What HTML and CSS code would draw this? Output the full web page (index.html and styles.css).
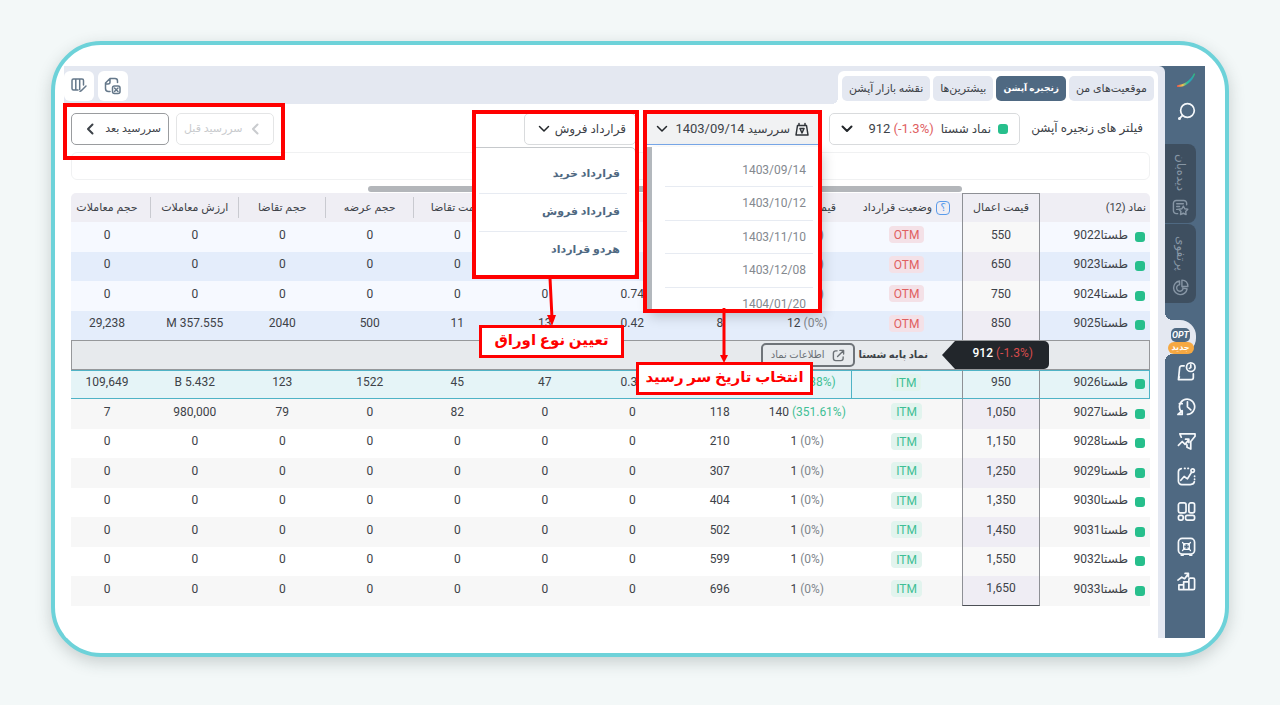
FILE: index.html
```
<!DOCTYPE html>
<html lang="fa" dir="rtl">
<head>
<meta charset="utf-8">
<meta name="viewport" content="width=device-width, initial-scale=1">
<title>زنجیره آپشن</title>
<link rel="stylesheet" href="styles.css">
</head>
<body>
<div class="frame">
<div class="app">

  <nav class="sidebar" aria-label="منوی اصلی">
    <a class="logo" href="#" aria-label="خانه">
      <svg width="20" height="16" viewBox="0 0 20 16"><defs><linearGradient id="lg" x1="0" x2="1"><stop offset="0" stop-color="#e0504f"/><stop offset=".3" stop-color="#f3c14d"/><stop offset=".55" stop-color="#2fc09a"/><stop offset=".8" stop-color="#2a9fb8"/><stop offset="1" stop-color="#35c46f"/></linearGradient></defs><path d="M1 13.200C8 12.500 14 9 18 1.200c1 0 1 .8.800 1.500C16 10 9 15.500 1 15z" fill="url(#lg)"/></svg>
    </a>
    <button class="side-btn search" type="button" aria-label="جستجو">
      <svg viewBox="0 0 20 20"><circle cx="11" cy="9" r="7.200"/><path d="M5.800 14 3 17"/><circle cx="2.600" cy="17.300" r=".7"/></svg>
    </button>
    <button class="side-tab" type="button">
      <span class="side-text">دیده‌بان</span>
      <svg viewBox="0 0 18 18"><path d="M15.500 6V4.500a3 3 0 0 0-3-3h-8a3 3 0 0 0-3 3v8a3 3 0 0 0 3 3H6M5 5h7M5 8h3M5 11h1.500"/><path d="m12 7.500 1.500 2.800 3.200.6-2.200 2.300.4 3.200-2.900-1.300L9 16.400l.5-3.200-2.300-2.300 3.300-.6z"/></svg>
    </button>
    <button class="side-tab" type="button">
      <span class="side-text">پرتفوی</span>
      <svg viewBox="0 0 18 18"><path d="M8 2.200a7.200 7.200 0 1 0 8 8.300L11 9.500M8 2.200V6M8 6a3.500 3.500 0 1 0 3.500 5"/><path d="M10.500 1.200V8h6.300c0-4-2.600-6.600-6.300-6.800z"/></svg>
    </button>
    <a class="side-opt" href="#"><span class="opt-mark">OPT</span><span class="opt-new">جدید</span></a>
    <div class="side-list">
      <button class="side-btn" type="button" aria-label="سفارش زمان‌دار"><svg viewBox="0 0 20 20"><path d="M7.500 4H5C3.500 4 3 4.500 2.800 6L1.500 18.500h13.500c1.500 0 2.200-.7 2.200-2.200V12.500M1.500 18.500l1-3"/><circle cx="14.500" cy="5.500" r="4.500"/><path d="M14.500 3v2.700l-1.500 1"/></svg></button>
      <button class="side-btn" type="button" aria-label="تاریخچه"><svg viewBox="0 0 20 20"><path d="M4.500 15.500A8 8 0 1 1 11 18.300M1 18.300h4.500V14.500M1 18.300l4.500-3.800M2.500 7h3M11 5v5.500l3.500 3"/></svg></button>
      <button class="side-btn" type="button" aria-label="فیلتر"><svg viewBox="0 0 20 20"><path d="M4.500 5.500 3 2h16v2.500L14.500 10v8l-4-2v-2.500M1.500 14l4-4 3 3L12.500 8M9 7.500h3.500V11"/></svg></button>
      <button class="side-btn" type="button" aria-label="نمودار"><svg viewBox="0 0 20 20"><path d="M4.500 1.800A3.500 3.500 0 0 0 1.500 5v10A3.500 3.500 0 0 0 5 18.500h9c2.500 0 4-1 4.300-3M18.500 9.500v.5M18.500 12.800v.3M8 1.500h.5M11.500 1.500h.5"/><path d="m4 14 3.500-4 3.500 2.500L15.300 5.500"/><circle cx="16.500" cy="3.800" r="1.800"/></svg></button>
      <button class="side-btn" type="button" aria-label="داشبورد"><svg viewBox="0 0 20 20"><rect x="1.500" y="1" width="8" height="10.500" rx="2"/><rect x="12.500" y="1" width="6" height="10.500" rx="2"/><rect x="1.500" y="14" width="5" height="5" rx="1.800"/><rect x="9" y="14" width="9.500" height="5" rx="1.800"/></svg></button>
      <button class="side-btn" type="button" aria-label="صندوق"><svg viewBox="0 0 20 20"><rect x="1.500" y="1.500" width="17" height="16.500" rx="4"/><path d="M4.500 19h2M13.500 19h2"/><path stroke-width="1.300" d="M7 7h6v6H7zM5.800 5.800 8.500 8.500M14.200 5.800l-2.700 2.700M5.800 14.200l2.700-2.700M14.200 14.200l-2.700-2.700"/></svg></button>
      <button class="side-btn" type="button" aria-label="بازار"><svg viewBox="0 0 20 20"><path d="M2 18.500v-5h5v5zM7 18.500V10.500h5.500v8M12.500 18.500V8A1.500 1.500 0 0 1 14 6.500h3A1.500 1.500 0 0 1 18.500 8v9a1.500 1.500 0 0 1-1.500 1.500H2M1 8.500l4-3 3 1.500 3.500-4.500M8.500 1.500H12V5"/></svg></button>
    </div>
  </nav>

  <main class="main">
    <header class="toolbar">
      <div class="tabs">
        <a class="tab" href="#">موقعیت‌های من</a>
        <a class="tab active" href="#">زنجیره آپشن</a>
        <a class="tab" href="#">بیشترین‌ها</a>
        <a class="tab" href="#">نقشه بازار آپشن</a>
      </div>
      <div class="tools">
        <button class="tool" type="button" aria-label="خروجی اکسل"><svg viewBox="0 0 18 18"><path d="M6 14.500H4.500a3 3 0 0 1-3-3V6L6 1.500h5a2.500 2.500 0 0 1 2.500 2.500v1.500M1.500 7H4a2 2 0 0 0 2-2V1.500"/><rect x="8.500" y="9" width="7.500" height="7.500" rx="2"/><path d="m10.500 11 3.500 3.500M14 11l-3.500 3.500"/></svg></button>
        <button class="tool" type="button" aria-label="ستون‌ها"><svg viewBox="0 0 18 18"><path d="M13.500 8V3.500A1.500 1.500 0 0 0 12 2H3.500A1.500 1.500 0 0 0 2 3.500v8A1.500 1.500 0 0 0 3.500 13H8M5.800 2v11M9.700 2v10.500M16 9l-4.500 4.500-1.500.8"/></svg></button>
      </div>
    </header>

    <section class="content">
      <div class="filters">
        <h1 class="filters-title">فیلتر های زنجیره آپشن</h1>
        <button class="picker symbol" type="button" aria-haspopup="listbox">
          <span class="dot"></span><span class="fa">نماد شستا</span>
          <span class="num big" dir="ltr">912 <span class="down">(-1.3%)</span></span>
          <svg class="chev" viewBox="0 0 12 8"><path d="m1.500 1.500 4.500 4.500 4.500-4.500"/></svg>
        </button>
        <div class="drop">
          <button class="picker date" type="button" aria-haspopup="listbox" aria-expanded="true">
            <svg class="cal" viewBox="0 0 14 14"><path d="M2.500 3.500h9L13 13H1zM4 1.500v2M10 1.500v2M5 6.500h4L7 11z"/></svg>
            <span class="fa">سررسید <span class="big">1403/09/14</span></span>
            <svg class="chev thin" viewBox="0 0 12 8"><path d="m1.500 1.500 4.500 4.500 4.500-4.500"/></svg>
          </button>
          <ul class="menu dates" role="listbox" aria-label="سررسید">
            <li role="option">1403/09/14</li><li role="option">1403/10/12</li><li role="option">1403/11/10</li><li role="option">1403/12/08</li><li role="option">1404/01/20</li>
          </ul>
        </div>
        <div class="drop">
          <button class="picker contract" type="button" aria-haspopup="listbox" aria-expanded="true">
            <span class="fa">قرارداد فروش</span>
            <svg class="chev thin" viewBox="0 0 12 8"><path d="m1.500 1.500 4.500 4.500 4.500-4.500"/></svg>
          </button>
          <ul class="menu contracts" role="listbox" aria-label="نوع قرارداد">
            <li role="option">قرارداد خرید</li><li role="option">قرارداد فروش</li><li role="option">هردو قرارداد</li>
          </ul>
        </div>
        <div class="pager">
          <button class="page" type="button" disabled><svg viewBox="0 0 8 12"><path d="M6.500 1.500 2 6l4.500 4.500"/></svg>سررسید قبل</button>
          <button class="page" type="button">سررسید بعد<svg viewBox="0 0 8 12"><path d="M6.500 1.500 2 6l4.500 4.500"/></svg></button>
        </div>
      </div>

      <div class="chips"></div>
      <div class="scroll"><span class="thumb"></span></div>

      <table class="chain">
        <colgroup><col class="c-symbol"><col class="c-strike"><col class="c-status"><col span="8"><col class="c-last"></colgroup>
        <thead>
          <tr><th>نماد (12)</th><th class="strike">قیمت اعمال</th><th><span class="help">؟</span>وضعیت قرارداد</th><th>قیمت</th><th></th><th></th><th></th><th>قیمت تقاضا</th><th>حجم عرضه</th><th>حجم تقاضا</th><th>ارزش معاملات</th><th>حجم معاملات</th></tr>
        </thead>
        <tbody>
          <tr class="otm"><td><span class="dot"></span>طستا9022</td><td class="strike">550</td><td><span class="tag red">OTM</span></td><td>1 <i>(0%)</i></td><td></td><td></td><td></td><td>0</td><td>0</td><td>0</td><td>0</td><td>0</td></tr>
          <tr class="otm"><td><span class="dot"></span>طستا9023</td><td class="strike">650</td><td><span class="tag red">OTM</span></td><td>1 <i>(0%)</i></td><td></td><td></td><td></td><td>0</td><td>0</td><td>0</td><td>0</td><td>0</td></tr>
          <tr class="otm"><td><span class="dot"></span>طستا9024</td><td class="strike">750</td><td><span class="tag red">OTM</span></td><td>1 <i>(0%)</i></td><td></td><td>0.74</td><td>0</td><td>0</td><td>0</td><td>0</td><td>0</td><td>0</td></tr>
          <tr class="otm"><td><span class="dot"></span>طستا9025</td><td class="strike">850</td><td><span class="tag red">OTM</span></td><td>12 <i>(0%)</i></td><td>8</td><td>0.42</td><td>13</td><td>11</td><td>500</td><td>2040</td><td>M 357.555</td><td>29,238</td></tr>
          <tr class="base"><td colspan="12"><div class="base-line"><span class="price-tag" dir="ltr">912 <span>(-1.3%)</span></span><strong>نماد پایه شستا</strong><button class="info" type="button"><svg viewBox="0 0 14 14"><path d="M5.500 2H4a2.500 2.500 0 0 0-2.500 2.500V10A2.500 2.500 0 0 0 4 12.500h5.500A2.500 2.500 0 0 0 12 10V8.500M6 8l6.500-6.500M8.500 1.500h4v4"/></svg>اطلاعات نماد</button></div></td></tr>
          <tr class="current"><td><span class="dot"></span>طستا9026</td><td class="strike">950</td><td><span class="tag green">ITM</span></td><td>81 <i class="up">(2.38%)</i></td><td></td><td>0.38</td><td>47</td><td>45</td><td>1522</td><td>123</td><td>B 5.432</td><td>109,649</td></tr>
          <tr><td><span class="dot"></span>طستا9027</td><td class="strike">1,050</td><td><span class="tag green">ITM</span></td><td>140 <i class="up">(351.61%)</i></td><td>118</td><td>0</td><td>0</td><td>82</td><td>0</td><td>79</td><td>980,000</td><td>7</td></tr>
          <tr><td><span class="dot"></span>طستا9028</td><td class="strike">1,150</td><td><span class="tag green">ITM</span></td><td>1 <i>(0%)</i></td><td>210</td><td>0</td><td>0</td><td>0</td><td>0</td><td>0</td><td>0</td><td>0</td></tr>
          <tr><td><span class="dot"></span>طستا9029</td><td class="strike">1,250</td><td><span class="tag green">ITM</span></td><td>1 <i>(0%)</i></td><td>307</td><td>0</td><td>0</td><td>0</td><td>0</td><td>0</td><td>0</td><td>0</td></tr>
          <tr><td><span class="dot"></span>طستا9030</td><td class="strike">1,350</td><td><span class="tag green">ITM</span></td><td>1 <i>(0%)</i></td><td>404</td><td>0</td><td>0</td><td>0</td><td>0</td><td>0</td><td>0</td><td>0</td></tr>
          <tr><td><span class="dot"></span>طستا9031</td><td class="strike">1,450</td><td><span class="tag green">ITM</span></td><td>1 <i>(0%)</i></td><td>502</td><td>0</td><td>0</td><td>0</td><td>0</td><td>0</td><td>0</td><td>0</td></tr>
          <tr><td><span class="dot"></span>طستا9032</td><td class="strike">1,550</td><td><span class="tag green">ITM</span></td><td>1 <i>(0%)</i></td><td>599</td><td>0</td><td>0</td><td>0</td><td>0</td><td>0</td><td>0</td><td>0</td></tr>
          <tr><td><span class="dot"></span>طستا9033</td><td class="strike">1,650</td><td><span class="tag green">ITM</span></td><td>1 <i>(0%)</i></td><td>696</td><td>0</td><td>0</td><td>0</td><td>0</td><td>0</td><td>0</td><td>0</td></tr>
        </tbody>
      </table>
    </section>
  </main>

  <div class="mark mark-pager"></div>
  <div class="mark mark-contract"></div>
  <div class="mark mark-date"></div>
  <svg class="arrow arrow-contract" viewBox="0 0 12 50"><path d="M5 0 7 40" stroke="#f00" stroke-width="3"/><path d="M2 37h9L7 48z" fill="#f00" stroke="none"/></svg>
  <svg class="arrow arrow-date" viewBox="0 0 12 56"><path d="M6 1V48" stroke="#f00" stroke-width="3"/><path d="M2 47h8L6 55z" fill="#f00" stroke="none"/></svg>
  <div class="note note-contract">تعیین نوع اوراق</div>
  <div class="note note-date">انتخاب تاریخ سر رسید</div>
</div>
</div>
</body>
</html>
```

FILE: styles.css
```
:root {
  --slate: #4f6982;
  --mist: #e4e8f1;
  --ink: #3d4248;
  --green: #27bf8c;
  --red: #e0605f;
}
* { box-sizing: border-box; }
body {
  margin: 0;
  min-height: 100vh;
  padding: 41px 51px 48px;
  background: #f3f8f8;
  color: var(--ink);
  font: 11px/16px Roboto, "DejaVu Sans", sans-serif;
}
button { font: inherit; color: inherit; margin: 0; padding: 0; border: 0; background: none; }
a { color: inherit; text-decoration: none; }
svg { display: block; flex: none; fill: none; stroke: currentColor; stroke-width: 1.5; stroke-linecap: round; stroke-linejoin: round; }
i { font-style: normal; }

.frame {
  overflow: hidden;
  padding: 21px 20px 15px 9px;
  border: 4px solid #6dd2d9;
  border-radius: 50px;
  background: #fff;
  box-shadow: 0 5px 16px rgba(40, 60, 60, .22);
}
.app { position: relative; display: flex; min-height: 572px; background: linear-gradient(to left, var(--slate) 60px, #fff 60px); }

/* sidebar */
.sidebar { flex: 0 0 40px; display: flex; flex-direction: column; align-items: flex-start; color: #f4f7fa; }
.logo { padding: 6px 9px 10px; }
.logo svg { stroke: none; }
.side-btn { width: 38px; height: 35px; display: grid; place-items: center; }
.side-btn svg { width: 19px; height: 19px; stroke-width: 1.8; }
.search { height: 26px; margin-bottom: 20px; }
.side-tab {
  width: 31px; height: 79px; margin: 0 9px 1px 0;
  display: flex; flex-direction: column; align-items: center; justify-content: flex-end; gap: 5px;
  padding: 8px 0 7px;
  border-radius: 0 8px 8px 0;
  background: #3e4f60; color: #8796a5;
}
.side-tab svg { width: 17px; height: 17px; }
.side-text { flex: 1; writing-mode: vertical-rl; font-size: 12px; line-height: 16px; text-align: center; }
.side-opt {
  position: relative;
  display: flex; flex-direction: column; align-items: center;
  width: 31px; height: 34px; margin: 16px 9px 0 0; padding-top: 8px;
  border-radius: 0 16px 16px 0;
  background: var(--mist);
}
.side-opt::before, .side-opt::after { content: ""; position: absolute; left: 0; width: 8px; height: 8px; }
.side-opt::before { bottom: 100%; background: radial-gradient(circle at 100% 0, transparent 8px, var(--mist) 8px); }
.side-opt::after { top: 100%; background: radial-gradient(circle at 100% 100%, transparent 8px, var(--mist) 8px); }
.opt-mark { padding: 0 1px; border-radius: 5px; background: var(--slate); color: #fff; font: italic bold 9px/14px Roboto, sans-serif; }
.opt-new { padding: 0 4px; border-radius: 6px; background: #f5a842; color: #fff; font-size: 8px; font-weight: bold; line-height: 12px; }
.side-list { position: relative; }

/* toolbar */
.main { flex: 1; min-width: 0; display: flex; flex-direction: column; padding: 5px 7px 0 0; background: var(--mist); border-radius: 0 6px 0 0; }
.toolbar { display: flex; justify-content: space-between; height: 33px; }
.tabs { position: relative; display: flex; gap: 3px; padding: 5px 4px 3px; border-radius: 6px 6px 0 0; background: #fff; }
.tabs::after {
  content: ""; position: absolute; right: 100%; bottom: 0; width: 6px; height: 6px;
  background: radial-gradient(circle at 0 0, transparent 6px, #fff 6px);
}
.tab { padding: 0 7px; border-radius: 5px; background: var(--mist); line-height: 25px; white-space: nowrap; }
.tab.active { background: var(--slate); color: #fff; font-weight: bold; font-size: 9px; }
.tools { display: flex; gap: 4px; }
.tool { width: 30px; height: 30px; display: grid; place-items: center; border-radius: 6px; background: #fff; color: #65788a; }
.tool svg { width: 18px; height: 18px; }

/* filters */
.content { flex: 1; padding: 9px 8px 0 7px; background: #fff; }
.filters { display: flex; gap: 10px; height: 32px; }
.filters-title { width: 120px; margin: 0; padding-right: 7px; font-size: 12px; font-weight: normal; line-height: 30px; white-space: nowrap; }
.drop { position: relative; }
.picker { display: flex; align-items: center; height: 32px; border: 1px solid #d9dbdd; border-radius: 5px; background: #fff; font-size: 12px; white-space: nowrap; }
.big { font-size: 13px; }
.symbol { width: 191px; padding: 0 11px; gap: 7px; }
.date { width: 173px; padding: 0 9px; gap: 5px; background: #f1f2f3; border-bottom: 1px solid #78a8ea; border-radius: 0; }
.contract { width: 112px; padding: 0 9px; }
.down { color: var(--red); }
.dot { display: inline-block; flex: none; width: 10px; height: 10px; border-radius: 3px; background: var(--green); }
.chev { width: 12px; height: 8px; margin-right: auto; stroke-width: 2; color: #22262a; }
.chev.thin { stroke-width: 1.5; }
.contract .chev { margin-left: 4px; }
.cal { width: 14px; height: 14px; color: #30353a; }
.pager { display: flex; gap: 7px; margin-right: auto; }
.page { display: flex; align-items: center; justify-content: space-between; width: 98px; height: 32px; padding: 0 7px; border: 1px solid #9a9c9f; border-radius: 5px; white-space: nowrap; }
.page svg { width: 8px; height: 12px; margin: 0 7px; stroke-width: 2; }
.page:disabled { border-color: #e4e5e6; color: #c9cbce; }

.menu { position: absolute; z-index: 2; top: 34px; right: 0; margin: 0; padding: 0; list-style: none; background: #fff; }
.dates { width: 173px; height: 163px; overflow: hidden; padding: 7px 6px 0 13px; border-left: 6px solid #b3b8bd; box-shadow: 4px 6px 12px rgba(0, 0, 0, .2); font-size: 12px; color: #84898f; }
.dates li { height: 33px; padding: 0 7px; line-height: 32px; border-bottom: 1px solid #e7ebf2; }
.dates li:nth-child(even) { height: 34px; }
.contracts { width: 162px; height: 130px; padding: 8px 8px 0 4px; border: 1px solid #c6c9cc; border-radius: 0 5px 5px 0; font-weight: bold; color: var(--slate); }
.contracts li { height: 38px; padding: 0 7px; line-height: 35px; border-bottom: 1px solid #e7ebf2; }
.contracts li:last-child { border: 0; }

.chips { height: 28px; margin-top: 7px; border: 1px solid #f0f1f2; border-radius: 6px; }
.scroll { margin-top: 6px; padding: 0 188px 0 297px; }
.thumb { display: block; height: 6px; border-radius: 3px; background: #b3b6ba; }

/* chain table */
.chain { width: 100%; margin-top: 1px; table-layout: fixed; border-collapse: separate; border-spacing: 0; font-size: 12px; }
.c-symbol { width: 110px; }
.c-strike { width: 78px; }
.c-status { width: 111px; }
.c-last { width: 80px; }
.chain th { position: relative; height: 29px; padding: 0; background: #efeef4; font-size: 11px; font-weight: normal; white-space: nowrap; }
.chain th:first-child { padding-right: 4px; text-align: right; border-radius: 0 5px 0 0; }
.chain th:last-child { border-radius: 5px 0 0 0; }
.chain th:nth-child(4) { padding-right: 15px; text-align: right; }
.chain th:nth-child(n+5)::before { content: ""; position: absolute; right: 0; top: 4px; bottom: 4px; border-right: 1px solid #c9cad0; }
.chain .strike { border: 0 solid #8e9095; border-width: 0 1px; }
.chain th.strike { border-top-width: 1px; }
.help { display: inline-block; width: 14px; height: 14px; margin-left: 4px; border: 1px solid #5b9bea; border-radius: 4px; color: #5b9bea; line-height: 12px; text-align: center; }
.chain td { height: 29px; padding: 0 0 5px; text-align: center; direction: ltr; white-space: nowrap; }
.chain tr:nth-child(odd) td { height: 30px; }
.chain th:last-child, .chain td:last-child { padding-right: 8px; }
.chain td:first-child { padding-right: 5px; text-align: right; direction: rtl; }
.chain td .dot { margin-left: 7px; vertical-align: -3px; }
.chain td i { color: #80868c; }
.chain td i.up { color: #3fbf95; }
tbody tr:nth-child(odd) td { background: #f7f7f7; }
tbody tr.otm td { background: #e4edfb; }
tbody tr.otm:nth-child(odd) td { background: #f6f9ff; }
tbody tr td.strike { background: #f8f8f8; }
tbody tr:nth-child(odd) td.strike,
tbody tr.otm:nth-child(even) td.strike { background: #efedf4; }
tbody tr.otm:nth-child(odd) td.strike { background: #f8f8f8; }
.chain tr:last-child td.strike { border-bottom: 1px solid #4c5056; }
.tag { display: inline-block; padding: 1px 5px 0; border-radius: 4px; line-height: 16px; vertical-align: middle; }
.red { background: #f4e1e7; color: var(--red); }
.green { background: #e2f4ee; color: #3fbf95; }
tbody tr.current td, tbody tr.current td.strike { background: #e5f4f7; border-top: 1px solid #4fb3c6; border-bottom: 1px solid #4fb3c6; }
tbody tr.current td:first-child { padding-right: 4px; border-right: 1px solid #4fb3c6; }
tbody tr.current td:nth-child(3) { border-left: 1px solid #4fb3c6; }
tbody tr.base td { padding: 0; background: #e7eaed; border: 1px solid #96989b; }
.base-line { display: flex; align-items: center; height: 28px; padding-right: 95px; }
.price-tag { width: 107px; height: 28px; padding: 0 16px 4px 28px; background: #22262b; color: #fff; line-height: 24px; font-weight: 500; clip-path: polygon(0 50%, 13px 0, 100% 0, 100% 100%, 13px 100%); border-radius: 5px; }
.price-tag span { color: #d84b4b; font-weight: normal; }
.base strong { margin: 0 14px 0 4px; font-size: 10px; }
.info { display: flex; align-items: center; gap: 7px; height: 24px; padding: 0 8px; border: 2px solid #6f7479; border-radius: 5px; color: #6b7075; font-size: 10px; }
.info svg { width: 13px; height: 13px; }

/* callouts */
.mark { position: absolute; z-index: 3; border: 4px solid #f00; pointer-events: none; }
.mark-pager { left: -1px; top: 37px; width: 222px; height: 57px; }
.mark-contract { right: 566px; top: 44px; width: 167px; height: 169px; }
.mark-date { right: 383px; top: 44px; width: 179px; height: 203px; }
.arrow { position: absolute; z-index: 4; width: 12px; }
.arrow-contract { right: 648px; top: 212px; height: 50px; }
.arrow-date { right: 475px; top: 242px; height: 56px; }
.note { position: absolute; z-index: 3; border: 3px solid #f00; background: #fff; color: #f00; font-size: 15px; font-weight: bold; line-height: 24px; text-align: center; white-space: nowrap; }
.note-contract { right: 581px; top: 259px; width: 145px; height: 33px; }
.note-date { right: 392px; top: 296px; width: 177px; height: 33px; }
```
